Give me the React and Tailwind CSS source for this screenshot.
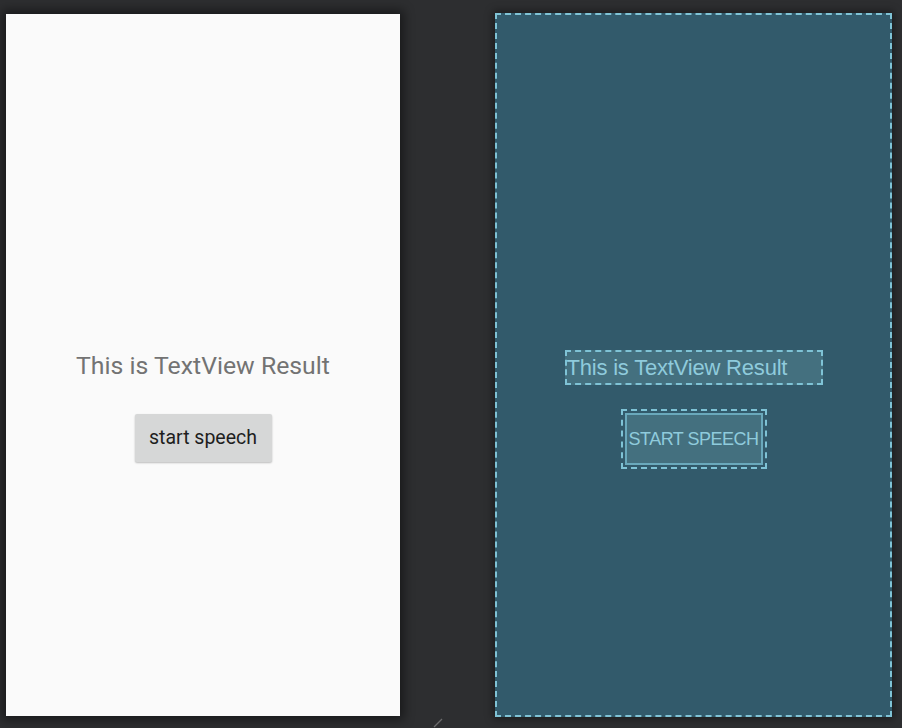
import React from "react";

export default function App() {
  return (
    <div className="w-[902px] h-[728px] bg-[#2d2e30] relative overflow-hidden" style={{ fontFamily: "Roboto, 'Liberation Sans', sans-serif" }}>
      <div className="flex items-start pt-[13px]">
        {/* Design view */}
        <div className="ml-[6px] mt-[1px] w-[394px] h-[702px] bg-[#fafafa] shadow-[0_0_10px_4px_rgba(0,0,0,0.45)] flex flex-col items-center">
          <div className="mt-[338px] text-[24.8px] leading-[28px] text-[#737373]">This is TextView Result</div>
          <button className="mt-[34px] w-[137px] h-[48px] bg-[#d6d7d7] rounded-[2px] shadow-[0_1px_2px_rgba(0,0,0,0.25)] text-[19.5px] text-[#1e1e1e] flex items-center justify-center">
            start speech
          </button>
        </div>
        {/* Blueprint view */}
        <div className="ml-[95px] w-[397px] h-[704px] bg-[#325a6b] border-2 border-dashed border-[#7fc3d6] shadow-[0_0_8px_2px_rgba(0,0,0,0.4)] flex flex-col items-center" style={{ fontFamily: "'Liberation Sans', Arial, sans-serif" }}>
          <div className="mt-[335px] w-[258px] h-[35px] bg-[#44707f] border-2 border-dashed border-[#7fc3d6] flex items-center">
            <span className="text-[22px] leading-[24px] text-[#8fcbdc] tracking-[-0.2px] mt-[1px]">This is TextView Result</span>
          </div>
          <div className="mt-[24px] w-[146px] h-[60px] border-2 border-dashed border-[#7fc3d6] p-[2px]">
            <div className="w-full h-full border-2 border-[#6aa9bc] bg-[#44707f] flex items-center justify-center">
              <span className="text-[18px] leading-[18px] text-[#8fcbdc] tracking-[-0.5px] whitespace-nowrap">START SPEECH</span>
            </div>
          </div>
        </div>
      </div>
      <svg className="absolute left-[432px] top-[718px]" width="12" height="10" viewBox="0 0 12 10">
        <line x1="2" y1="9" x2="10" y2="1" stroke="#6b6b6b" strokeWidth="1.2" />
      </svg>
    </div>
  );
}
